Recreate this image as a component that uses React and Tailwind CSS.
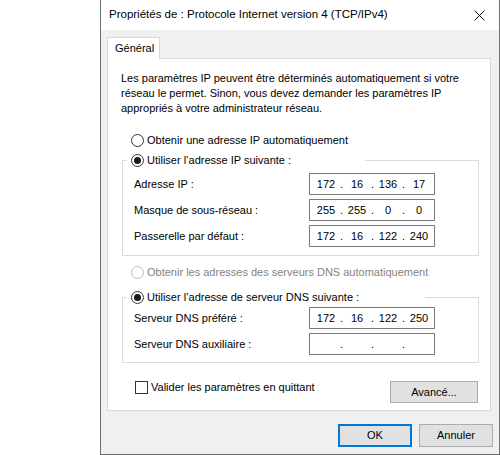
import React from 'react'

const FONT = { fontFamily: '"Segoe UI", "Liberation Sans", Arial, sans-serif' }

function Radio({ checked = false, disabled = false, label }) {
  return (
    <div className={`flex items-center h-[16px] ${disabled ? 'text-[#838383]' : 'text-black'}`}>
      <span
        className={`w-[13px] h-[13px] rounded-full border flex items-center justify-center shrink-0 bg-white ${
          disabled ? 'border-[#bcbcbc]' : 'border-[#333333]'
        }`}
      >
        {checked && <span className="w-[7px] h-[7px] rounded-full bg-[#1a1a1a]" />}
      </span>
      <span className="ml-[3px] whitespace-nowrap">{label}</span>
    </div>
  )
}

function IpBox({ parts }) {
  return (
    <div className="w-[126px] h-[22px] border border-[#7a7a7a] bg-white flex items-center pl-[5px]">
      {parts.map((p, i) => (
        <React.Fragment key={i}>
          {i > 0 && <span className="w-[9px] text-center">.</span>}
          <span className="w-[22px] text-center">{p}</span>
        </React.Fragment>
      ))}
    </div>
  )
}

function Row({ label, parts }) {
  return (
    <div className="flex items-center h-[22px]">
      <span className="w-[175px] whitespace-nowrap">{label}</span>
      <IpBox parts={parts} />
    </div>
  )
}

function Button({ children, primary = false, className = '' }) {
  return (
    <div
      className={`bg-[#e1e1e1] flex items-center justify-center ${
        primary ? 'border-2 border-[#0078d7]' : 'border border-[#adadad]'
      } ${className}`}
    >
      {children}
    </div>
  )
}

export default function App() {
  return (
    <div className="w-[500px] h-[455px] bg-white text-[11px] text-black overflow-hidden" style={FONT}>
      <div className="ml-[100px] w-[400px] h-[455px] border-x border-b border-[#6e6e6e] flex flex-col">
        {/* title bar */}
        <div className="h-[30px] bg-white flex items-center pl-[8px] pr-[10px] shrink-0 text-[11.5px]">
          <span className="flex-1 whitespace-nowrap">Propriétés de : Protocole Internet version 4 (TCP/IPv4)</span>
          <svg width="11" height="11" viewBox="0 0 11 11" className="mr-[4px]">
            <path d="M0.5 0.5 L10.5 10.5 M10.5 0.5 L0.5 10.5" stroke="#111" strokeWidth="1" />
          </svg>
        </div>

        {/* body */}
        <div className="flex-1 bg-[#f0f0f0] pl-[6px] pr-[8px] pt-[7px] flex flex-col">
          <div className="flex">
            <div className="w-[53px] h-[22px] border-t border-x border-[#d9d9d9] bg-white -mb-px relative z-10 pl-[7px] flex items-center">
              Général
            </div>
          </div>

          <div className="h-[353px] border border-[#d9d9d9] bg-white flex flex-col">
            <p className="mt-[12px] ml-[13px] leading-[15px] whitespace-nowrap">
              Les paramètres IP peuvent être déterminés automatiquement si votre
              <br />
              réseau le permet. Sinon, vous devez demander les paramètres IP
              <br />
              appropriés à votre administrateur réseau.
            </p>

            <div className="mt-[16px] ml-[23px]">
              <Radio label="Obtenir une adresse IP automatiquement" />
            </div>

            <fieldset className="mt-[4px] ml-[14px] w-[357px] border border-[#dcdcdc] p-0 pb-[8px] pl-[11px]">
              <legend className="ml-[-7px] w-[238px] pl-[4px]">
                <Radio checked label="Utiliser l’adresse IP suivante :" />
              </legend>
              <div className="mt-[5px] flex flex-col gap-[4px]">
                <Row label="Adresse IP :" parts={['172', '16', '136', '17']} />
                <Row label="Masque de sous-réseau :" parts={['255', '255', '0', '0']} />
                <Row label="Passerelle par défaut :" parts={['172', '16', '122', '240']} />
              </div>
            </fieldset>

            <div className="mt-[8px] ml-[23px]">
              <Radio disabled label="Obtenir les adresses des serveurs DNS automatiquement" />
            </div>

            <fieldset className="mt-[9px] ml-[14px] w-[357px] border border-[#dcdcdc] p-0 pb-[7px] pl-[11px]">
              <legend className="ml-[-7px] w-[298px] pl-[4px]">
                <Radio checked label="Utiliser l’adresse de serveur DNS suivante :" />
              </legend>
              <div className="mt-[2px] flex flex-col gap-[4px]">
                <Row label="Serveur DNS préféré :" parts={['172', '16', '122', '250']} />
                <Row label="Serveur DNS auxiliaire :" parts={['', '', '', '']} />
              </div>
            </fieldset>

            <div className="mt-[18px] flex justify-between items-start pl-[27px] pr-[12px]">
              <div className="flex items-center h-[13px]">
                <span className="w-[13px] h-[13px] border border-[#333333] bg-white shrink-0" />
                <span className="ml-[3px] whitespace-nowrap">Valider les paramètres en quittant</span>
              </div>
              <Button className="w-[88px] h-[22px]">Avancé...</Button>
            </div>
          </div>

          <div className="mt-[13px] flex justify-end gap-[7px] mr-[-2px]">
            <Button primary className="w-[74px] h-[23px]">OK</Button>
            <Button className="w-[74px] h-[23px]">Annuler</Button>
          </div>
        </div>
      </div>
    </div>
  )
}
